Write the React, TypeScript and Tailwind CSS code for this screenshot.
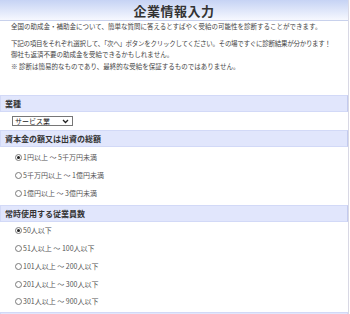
const capitalOptions = ['1円以上 ～ 5千万円未満', '5千万円以上 ～ 1億円未満', '1億円以上 ～ 3億円未満'];
const employeeOptions = ['50人以下', '51人以上 ～ 100人以下', '101人以上 ～ 200人以下', '201人以上 ～ 300人以下', '301人以上 ～ 900人以下'];

function SectionBar({ title }: { title: string }) {
  return (
    <div className="h-[17px] border border-[#d2d9f7] border-r-[#c3cbee] bg-[#e1e6fc] px-[4px] flex items-center">
      <span className="text-[8px] leading-none font-bold text-[#333]">{title}</span>
    </div>
  );
}

function Radio({ label, checked, rowClass }: { label: string; checked?: boolean; rowClass: string }) {
  return (
    <div className={`${rowClass} flex items-center pl-[15px] gap-[1px]`}>
      <span className="w-[7px] h-[7px] rounded-full border border-[#7a7a7a] bg-white flex items-center justify-center">
        {checked && <span className="w-[3px] h-[3px] rounded-full bg-[#222]" />}
      </span>
      <span className="text-[7px] leading-none text-[#555]">{label}</span>
    </div>
  );
}

export default function App() {
  return (
    <div className="w-[349px] h-[314px] overflow-hidden bg-white border-r border-[#d8d8e4] font-['Noto_Sans_CJK_JP',sans-serif]">
      <div className="h-[21px] border-b border-[#c8d1ec] bg-gradient-to-b from-[#c6d3f4] to-[#f6f8fe] flex items-center justify-center">
        <h1 className="text-[13px] leading-none font-bold text-[#333] tracking-[0.5px]">企業情報入力</h1>
      </div>

      <div className="px-[11px] text-[6.5px] leading-[11.5px] text-[#444] whitespace-nowrap">
        <p>全国の助成金・補助金について、簡単な質問に答えるとすばやく受給の可能性を診断することができます。</p>
        <p className="mt-[5px] tracking-[-0.27px]">下記の項目をそれぞれ選択して、「次へ」ボタンをクリックしてください。その場ですぐに診断結果が分かります！</p>
        <p>御社も返済不要の助成金を受給できるかもしれません。</p>
        <p>※ 診断は簡易的なものであり、最終的な受給を保証するものではありません。</p>
      </div>

      <div className="mt-[23px]">
        <SectionBar title="業種" />
      </div>
      <div className="mt-[4px] ml-[12px] w-[61px] h-[10px] border border-[#767676] bg-white flex items-center justify-between pl-[2px] pr-[3px]">
        <span className="text-[7px] leading-none text-[#222]">サービス業</span>
        <svg width="7" height="5" viewBox="0 0 7 5" fill="none">
          <path d="M1 1l2.5 2.5L6 1" stroke="#222" strokeWidth="1.3" />
        </svg>
      </div>

      <div className="mt-[4px]">
        <SectionBar title="資本金の額又は出資の総額" />
      </div>
      <div className="mt-[1px]">
        {capitalOptions.map((o, i) => (
          <Radio key={o} label={o} checked={i === 0} rowClass="h-[18px]" />
        ))}
      </div>

      <div className="mt-[3px]">
        <SectionBar title="常時使用する従業員数" />
      </div>
      <div>
        {employeeOptions.map((o, i) => (
          <Radio key={o} label={o} checked={i === 0} rowClass="h-[17.75px]" />
        ))}
      </div>

      <div className="mt-[1px] h-[17px] border border-[#d2d9f7] bg-[#e1e6fc]" />
    </div>
  );
}
